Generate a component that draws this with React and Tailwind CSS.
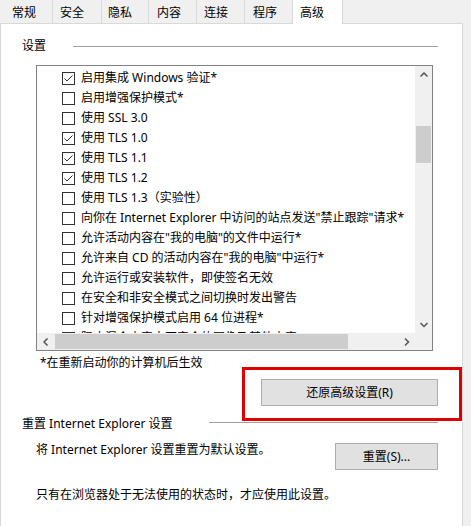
import React from "react";

const tabs = [
  { label: "常规", w: "w-[53px]", pl: "pl-[12px]" },
  { label: "安全", w: "w-[49px]", pl: "pl-[7px]" },
  { label: "隐私", w: "w-[47px]", pl: "pl-[6px]" },
  { label: "内容", w: "w-[48px]", pl: "pl-[8px]" },
  { label: "连接", w: "w-[48px]", pl: "pl-[7px]" },
  { label: "程序", w: "w-[48px]", pl: "pl-[8px]" },
];

const options = [
  { label: "启用集成 Windows 验证*", checked: true },
  { label: "启用增强保护模式*" },
  { label: "使用 SSL 3.0" },
  { label: "使用 TLS 1.0", checked: true },
  { label: "使用 TLS 1.1", checked: true },
  { label: "使用 TLS 1.2", checked: true },
  { label: "使用 TLS 1.3（实验性）" },
  { label: '向你在 Internet Explorer 中访问的站点发送"禁止跟踪"请求*' },
  { label: '允许活动内容在"我的电脑"的文件中运行*' },
  { label: '允许来自 CD 的活动内容在"我的电脑"中运行*' },
  { label: "允许运行或安装软件，即使签名无效" },
  { label: "在安全和非安全模式之间切换时发出警告" },
  { label: "针对增强保护模式启用 64 位进程*" },
  { label: "阻止混合内容中不安全的图像及其他内容" },
];

// small scrollbar arrow, rotated per direction
const Chevron = ({ dir }) => {
  const pts = {
    up: "0.5,4.5 4,1 7.5,4.5",
    down: "0.5,1 4,4.5 7.5,1",
    left: "4.5,0.5 1,4 4.5,7.5",
    right: "1,0.5 4.5,4 1,7.5",
  }[dir];
  const horiz = dir === "left" || dir === "right";
  return (
    <svg
      width={horiz ? 6 : 8}
      height={horiz ? 8 : 6}
      viewBox={horiz ? "0 0 6 8" : "0 0 8 6"}
    >
      <polyline points={pts} fill="none" stroke="#555555" strokeWidth="1.5" />
    </svg>
  );
};

const Checkbox = ({ checked }) => (
  <div className="w-[13px] h-[13px] shrink-0 border border-[#333333] bg-white">
    {checked && (
      <svg width="11" height="11" viewBox="0 0 11 11">
        <polyline
          points="1.5,5.5 4,8 9.5,2.5"
          fill="none"
          stroke="#333333"
          strokeWidth="1"
        />
      </svg>
    )}
  </div>
);

const Button = ({ children, w }) => (
  <div
    className={`${w} h-[27px] flex items-center justify-center bg-[#e1e1e1] border border-[#adadad]`}
  >
    {children}
  </div>
);

export default function App() {
  return (
    <div className="w-[471px] h-[526px] overflow-hidden bg-[#f0f0f0] flex flex-col text-[12px] text-black font-['Noto_Sans','Noto_Sans_CJK_SC',sans-serif]">
      {/* tab strip */}
      <div className="flex h-[23px] items-start shrink-0">
        {tabs.map((t) => (
          <div
            key={t.label}
            className={`${t.w} ${t.pl} h-[23px] pt-[3px] flex items-center border-r border-[#d9d9d9] leading-[16px]`}
          >
            {t.label}
          </div>
        ))}
        <div className="relative z-10 w-[50px] h-[24px] pt-[2px] pl-[7px] flex items-center bg-white border-r border-[#d9d9d9] leading-[16px]">
          高级
        </div>
      </div>

      {/* panel */}
      <div className="relative w-[463px] flex-1 bg-white border-l border-t border-r border-[#d9d9d9] leading-[16px]">
        <div className="flex items-center h-[16px] mt-[14px]">
          <span className="ml-[21px]">设置</span>
          <div className="ml-auto mr-[24px] w-[365px] h-px bg-[#a0a0a0]" />
        </div>

        {/* options list */}
        <div className="ml-[35px] mt-[11px] w-[397px] h-[286px] border border-[#828282] flex flex-col">
          <div className="flex h-[267px]">
            <div className="w-[378px] h-[267px] overflow-hidden pt-[2px]">
              {options.map((o) => (
                <div
                  key={o.label}
                  className="h-[20px] flex items-center pl-[25px] whitespace-nowrap"
                >
                  <Checkbox checked={o.checked} />
                  <span className="ml-[6px]">{o.label}</span>
                </div>
              ))}
            </div>
            <div className="w-[17px] h-[267px] bg-[#f0f0f0] flex flex-col">
              <div className="h-[17px] flex items-center justify-center">
                <Chevron dir="up" />
              </div>
              <div className="h-[43px]" />
              <div className="h-[37px] mx-px bg-[#cdcdcd]" />
              <div className="flex-1" />
              <div className="h-[17px] flex items-center justify-center">
                <Chevron dir="down" />
              </div>
            </div>
          </div>
          <div className="flex h-[17px]">
            <div className="w-[378px] h-[17px] bg-[#f0f0f0] flex">
              <div className="w-[17px] flex items-center justify-center">
                <Chevron dir="left" />
              </div>
              <div className="ml-px w-[293px] my-px bg-[#cdcdcd]" />
              <div className="flex-1" />
              <div className="w-[17px] flex items-center justify-center">
                <Chevron dir="right" />
              </div>
            </div>
            <div className="w-[17px] h-[17px] bg-[#f0f0f0]" />
          </div>
        </div>

        <div className="ml-[39px] mt-[4px]">*在重新启动你的计算机后生效</div>

        <div className="flex justify-end pr-[24px] mt-[8px]">
          <Button w="w-[177px]">还原高级设置(R)</Button>
        </div>

        {/* annotation frame */}
        <div className="absolute left-[241px] top-[343px] w-[220px] h-[54px] border-[3px] border-[#e00000]" />

        <div className="flex items-start h-[16px] mt-[10px]">
          <span className="ml-[21px]">重置 Internet Explorer 设置</span>
          <div className="ml-auto mr-[24px] mt-[6px] w-[229px] h-px bg-[#a0a0a0]" />
        </div>

        <div className="flex items-start mt-[11px] pr-[24px]">
          <span className="ml-[35px] leading-[14px]">
            将 Internet Explorer 设置重置为默认设置。
          </span>
          <div className="ml-auto">
            <Button w="w-[103px]">重置(S)...</Button>
          </div>
        </div>

        <div className="ml-[35px] mt-[17px]">
          只有在浏览器处于无法使用的状态时，才应使用此设置。
        </div>
      </div>
    </div>
  );
}
